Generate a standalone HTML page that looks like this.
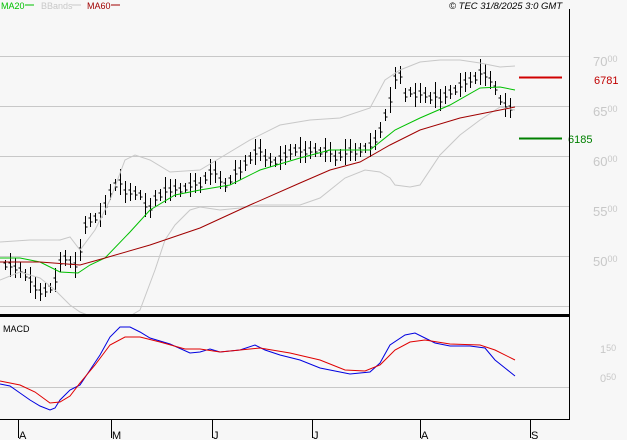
<!DOCTYPE html><html><head><style>
body{margin:0;background:#f7f7f7;width:627px;height:440px;overflow:hidden;font-family:"Liberation Sans",sans-serif}
</style></head><body>
<svg id="s" width="627" height="440" xmlns="http://www.w3.org/2000/svg" style="position:absolute;left:0;top:0">
<g font-size="9">
<text x="1" y="9" fill="#00c000">MA20</text><line x1="25" y1="5" x2="34" y2="5" stroke="#00c000"/>
<text x="41" y="9" fill="#c8c8c8">BBands</text><line x1="72" y1="5" x2="81" y2="5" stroke="#c8c8c8"/>
<text x="87" y="9" fill="#a00000">MA60</text><line x1="111" y1="5" x2="120" y2="5" stroke="#a00000"/>
<text x="449" y="9" fill="#000" font-style="italic" font-size="9.5">© TEC 31/8/2025 3:0 GMT</text>
</g>
<g stroke="#c8c8c8" stroke-width="1">
<line x1="0" y1="56.5" x2="569" y2="56.5"/><line x1="0" y1="106.5" x2="569" y2="106.5"/><line x1="0" y1="156.5" x2="569" y2="156.5"/><line x1="0" y1="206.5" x2="569" y2="206.5"/><line x1="0" y1="256.5" x2="569" y2="256.5"/><line x1="0" y1="306.5" x2="569" y2="306.5"/><line x1="0" y1="387.5" x2="569" y2="387.5"/>
</g>
<g fill="#c8c8c8" font-size="13">
<text x="593" y="66">70<tspan font-size="9" dy="-4">00</tspan></text>
<text x="593" y="116">65<tspan font-size="9" dy="-4">00</tspan></text>
<text x="593" y="166">60<tspan font-size="9" dy="-4">00</tspan></text>
<text x="593" y="216">55<tspan font-size="9" dy="-4">00</tspan></text>
<text x="593" y="266">50<tspan font-size="9" dy="-4">00</tspan></text>
<text x="600" y="353" font-size="11">1<tspan font-size="9" dy="-2">50</tspan></text>
<text x="600" y="382" font-size="11">0<tspan font-size="9" dy="-2">50</tspan></text>
</g>
<line x1="519" y1="77.5" x2="562" y2="77.5" stroke="#d00000" stroke-width="2"/>
<text x="594" y="84" fill="#c00000" font-size="11">6781</text>
<line x1="519" y1="138.5" x2="562" y2="138.5" stroke="#008000" stroke-width="2"/>
<text x="568" y="143" fill="#008000" font-size="11">6185</text>
<g id="bars" stroke="#000" stroke-width="1"></g>
<polyline fill="none" stroke="#c8c8c8" points="0,242 30,240 60,240 70,237 80,250 95,230 110,200 125,160 135,155 150,160 170,172 200,170 220,158 250,140 280,125 310,120 340,118 370,108 385,80 400,70 420,62 440,60 460,60 480,63 500,67 515,66"/>
<polyline fill="none" stroke="#c8c8c8" points="0,280 20,272 40,278 55,290 70,305 80,312 90,316 130,316 140,310 155,270 165,240 175,225 190,210 200,207 220,210 240,208 260,205 300,205 320,198 345,178 365,170 380,172 390,178 395,185 410,187 420,185 440,155 460,135 480,120 500,107 515,110"/>
<polyline fill="none" stroke="#00c000" points="0,258 20,258 40,262 60,272 78,273 90,265 105,258 130,232 150,210 175,195 200,190 230,185 260,170 300,158 330,150 370,150 395,130 420,118 450,105 480,88 500,87 515,90"/>
<polyline fill="none" stroke="#a00000" points="0,262 40,262 80,265 105,258 150,245 200,228 250,205 300,183 330,170 360,162 390,145 420,130 460,118 500,110 515,107"/>
<rect x="0" y="314" width="570" height="3" fill="#000"/>
<line x1="569.5" y1="9" x2="569.5" y2="420" stroke="#000"/>
<line x1="0" y1="419.5" x2="570" y2="419.5" stroke="#000"/>
<text x="3" y="332" font-size="9" fill="#000">MACD</text>
<polyline fill="none" stroke="#0000e0" points="0,384 10,386 20,393 30,400 40,406 50,410 55,408 60,400 70,390 80,385 90,370 100,355 110,337 120,327 130,327 140,332 150,338 170,344 190,353 200,352 210,349 220,352 240,350 255,345 265,350 280,355 300,360 320,368 340,372 350,374 370,372 380,363 390,345 405,335 415,333 425,338 435,343 450,346 470,346 485,348 495,360 505,368 515,376"/>
<polyline fill="none" stroke="#e00000" points="0,381 20,385 35,392 50,403 60,402 70,396 80,383 95,365 110,345 125,337 140,337 160,342 185,349 200,349 220,352 240,350 260,348 290,353 320,360 345,370 365,371 380,365 395,350 410,342 425,340 450,344 480,345 495,350 515,360"/>
<g stroke="#000"><line x1="18.5" y1="420" x2="18.5" y2="438"/><line x1="111.5" y1="420" x2="111.5" y2="438"/><line x1="212.5" y1="420" x2="212.5" y2="438"/><line x1="312.5" y1="420" x2="312.5" y2="438"/><line x1="420.5" y1="420" x2="420.5" y2="438"/><line x1="530.5" y1="420" x2="530.5" y2="438"/></g>
<g font-size="11" fill="#000"><text x="19" y="439">A</text><text x="112" y="439">M</text><text x="213" y="439">J</text><text x="313" y="439">J</text><text x="421" y="439">A</text><text x="531" y="439">S</text></g>
</svg>
<script>
var m=[265,265,268,270,275,280,288,292,290,288,280,262,258,262,265,250,225,220,218,215,205,192,185,182,192,192,193,195,205,208,198,195,190,190,188,190,188,185,183,185,178,172,172,180,185,180,172,170,163,158,152,150,158,160,162,158,155,152,150,150,152,150,150,152,150,152,158,155,152,150,152,150,148,145,140,130,115,100,78,75,95,92,95,93,95,98,95,100,95,92,90,85,82,80,78,72,75,80,88,100,105,108];
var g=document.getElementById('bars'),h='';
for(var i=0;i<m.length;i++){var x=5+i*5+.5,r=5+((i*7)%9),y=m[i];
h+='<line x1="'+x+'" y1="'+(y-r)+'" x2="'+x+'" y2="'+(y+r)+'"/><line x1="'+(x-2)+'" y1="'+(y-2)+'" x2="'+x+'" y2="'+(y-2)+'"/><line x1="'+x+'" y1="'+(y+2)+'" x2="'+(x+2)+'" y2="'+(y+2)+'"/>';}
g.innerHTML=h;
</script>
</body></html>
